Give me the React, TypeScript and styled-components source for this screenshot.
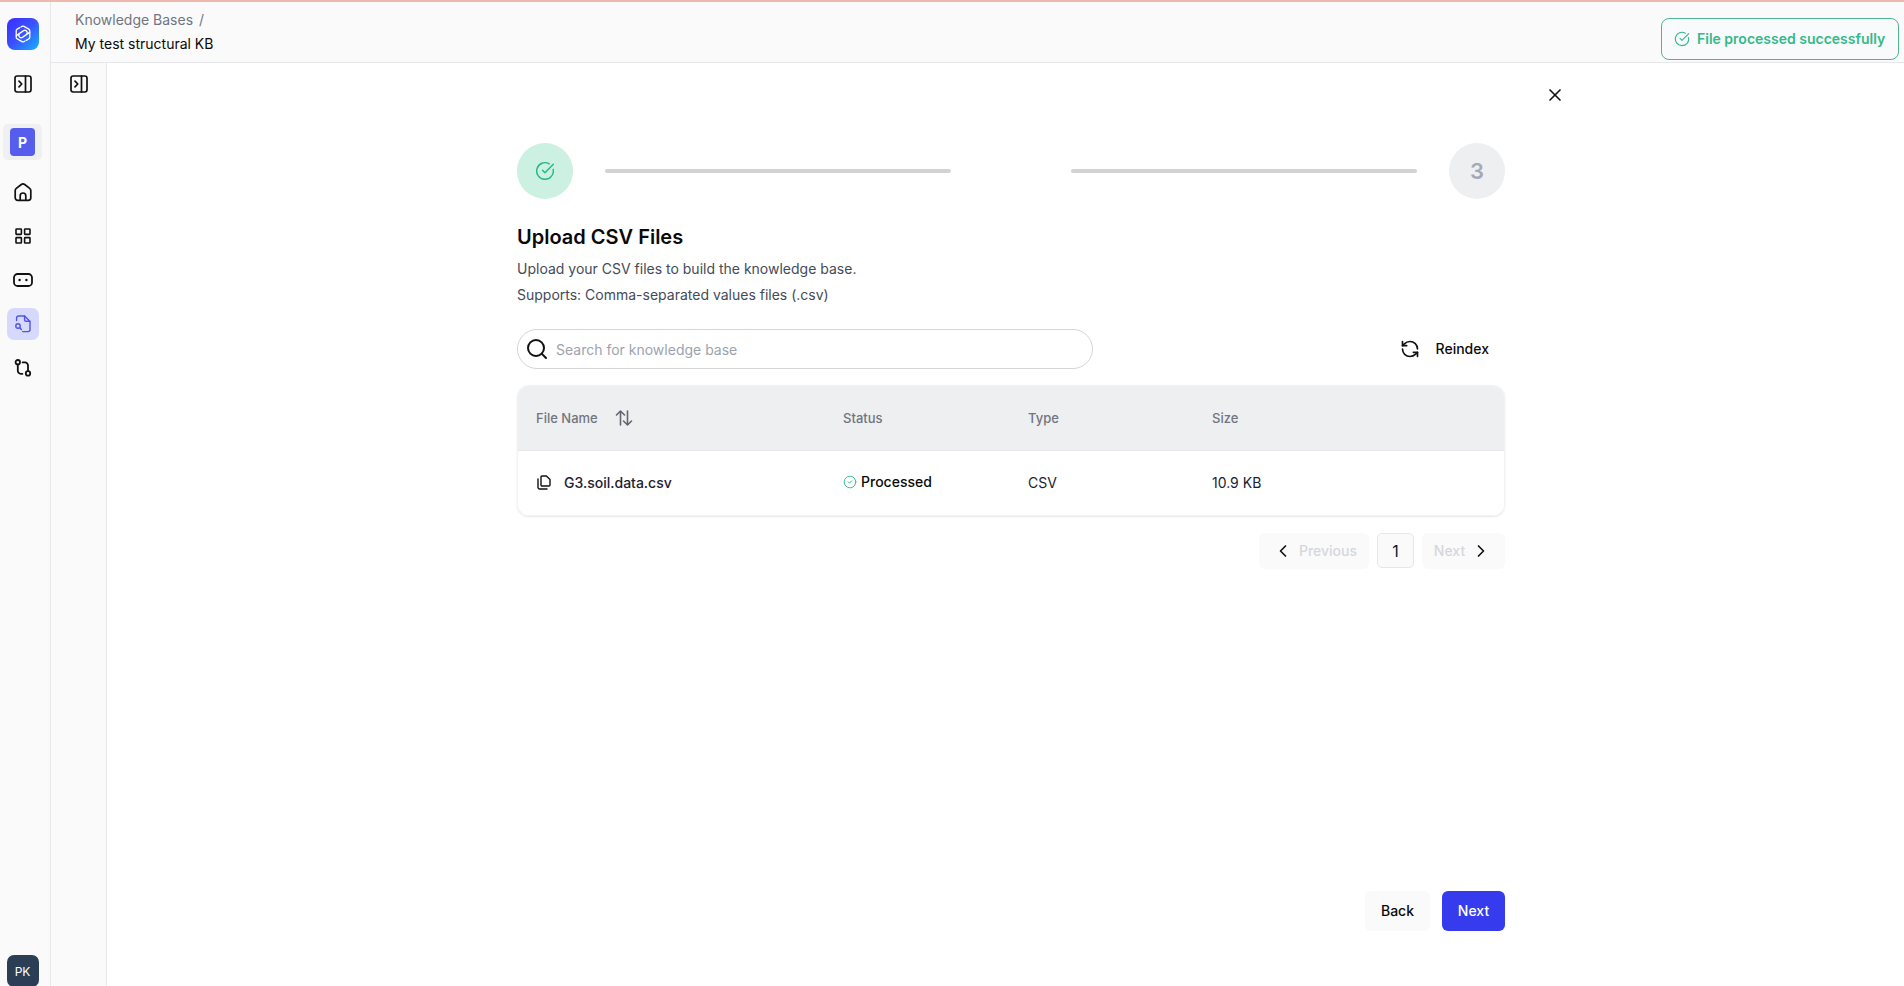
import React from 'react';
import styled, { createGlobalStyle } from 'styled-components';
import { ChevronLeft, ChevronRight, CircleCheck, CircleCheckBig, RefreshCcw, Search, X } from 'lucide-react';

const GlobalStyle = createGlobalStyle`
    html, body {
        margin: 0;
        padding: 0;
        height: 100%;
        overflow: hidden;
        background: #fff;
    }
    * {
        box-sizing: border-box;
    }
    body {
        font-family: Inter, "Liberation Sans", sans-serif;
        color: #0a0a0a;
    }
`;

const PanelToggleIcon = () => (
    <svg width="18" height="18" viewBox="0 0 18 18" fill="none" stroke="#111" strokeWidth="1.7" strokeLinecap="round" strokeLinejoin="round">
        <rect x="1" y="1" width="16" height="16" rx="2.2" />
        <path d="M11.5 1v16" />
        <path d="M5 6.2 7.8 9 5 11.8" />
    </svg>
);

const HomeIcon = () => (
    <svg width="18" height="20" viewBox="0 0 18 20" fill="none" stroke="#111" strokeWidth="1.7" strokeLinecap="round" strokeLinejoin="round">
        <path d="M1.2 8.6c0-.9.4-1.7 1.1-2.2l5-3.9a2.8 2.8 0 0 1 3.4 0l5 3.9c.7.5 1.1 1.3 1.1 2.2v7.2a2.6 2.6 0 0 1-2.6 2.6H3.8a2.6 2.6 0 0 1-2.6-2.6V8.6Z" />
        <path d="M6.2 18.2v-4.4a2.8 2.8 0 0 1 5.6 0v4.4" />
    </svg>
);

const GridIcon = () => (
    <svg width="16" height="16" viewBox="0 0 16 16" fill="none" stroke="#111" strokeWidth="1.6" strokeLinejoin="round">
        <rect x="1" y="1" width="5.4" height="5.4" rx="0.6" />
        <rect x="9.6" y="1" width="5.4" height="5.4" rx="0.6" />
        <rect x="1" y="9.6" width="5.4" height="5.4" rx="0.6" />
        <rect x="9.6" y="9.6" width="5.4" height="5.4" rx="0.6" />
    </svg>
);

const BotIcon = () => (
    <svg width="20" height="14" viewBox="0 0 20 14" fill="none">
        <rect x="1" y="1" width="18" height="12" rx="3.6" stroke="#111" strokeWidth="1.8" />
        <circle cx="6.6" cy="7" r="1.2" fill="#111" />
        <circle cx="13.4" cy="7" r="1.2" fill="#111" />
    </svg>
);

const FileSearchIcon = () => (
    <svg width="18" height="18" viewBox="0 0 18 18" fill="none" stroke="#4f55e8" strokeWidth="1.4" strokeLinecap="round" strokeLinejoin="round">
        <path d="M2.6 5.6V3a2 2 0 0 1 2-2h6L16 6.4v8.2a2 2 0 0 1-2 2H8.6" />
        <path d="M10.6 1v4a1.2 1.2 0 0 0 1.2 1.2H16" />
        <circle cx="4" cy="11" r="2.2" />
        <path d="M5.7 12.8 7.4 14.6" />
    </svg>
);

const RouteIcon = () => (
    <svg width="18" height="18" viewBox="0 0 18 18" fill="none" stroke="#111" strokeWidth="1.8" strokeLinecap="round" strokeLinejoin="round">
        <circle cx="3.8" cy="3.2" r="2.2" />
        <circle cx="14" cy="14.4" r="2.2" />
        <path d="M3.8 5.6v6.2a3 3 0 0 0 3 3h1.6" />
        <path d="M14 12.2V6.4a3 3 0 0 0-3-3H8.6" />
    </svg>
);

const LogoMark = () => (
    <svg width="18" height="18" viewBox="0 0 18 18" fill="none" stroke="#fff" strokeWidth="1.3" strokeLinecap="round" strokeLinejoin="round">
        <path d="M7 2 8 1.4a2 2 0 0 1 2 0l4.8 2.7a2 2 0 0 1 1 1.7v6.4a2 2 0 0 1-1 1.7l-2.6 1.5" />
        <path d="M11 16 10 16.6a2 2 0 0 1-2 0l-4.8-2.7a2 2 0 0 1-1-1.7V5.8a2 2 0 0 1 1-1.7l2.6-1.5" />
        <path d="M2.4 10.6 9.6 5.6a2.4 2.4 0 0 1 3.2 3.4" />
        <path d="M15.6 7.4 8.4 12.4a2.4 2.4 0 0 1-3.2-3.4" />
    </svg>
);

const SortIcon = () => (
    <svg width="18" height="18" viewBox="0 0 18 18" fill="none" stroke="#62666f" strokeWidth="1.6" strokeLinecap="round" strokeLinejoin="round">
        <path d="M5.5 16V2M1.5 6l4-4 4 4" />
        <path d="M12.5 2v14M8.5 12l4 4 4-4" />
    </svg>
);

const FileCopyIcon = () => (
    <svg width="14" height="15" viewBox="0 0 14 15" fill="none" stroke="#111" strokeWidth="1.4" strokeLinecap="round" strokeLinejoin="round">
        <path d="M4 3.4V2a1 1 0 0 1 1-1h4.4L13 4.4V10a1 1 0 0 1-1 1H5a1 1 0 0 1-1-1V3.4Z" />
        <path d="M1 4v8.6A1.4 1.4 0 0 0 2.4 14H10" />
    </svg>
);

const COLUMNS = ['Status', 'Type', 'Size'];

export default function App(): JSX.Element {
    return (
        <>
            <GlobalStyle />
            <Page>
                <TopLine />
                <Body>
                    <Rail>
                        <Logo><LogoMark /></Logo>
                        <RailToggle><PanelToggleIcon /></RailToggle>
                        <ProjectWrap><ProjectTile>P</ProjectTile></ProjectWrap>
                        <Nav>
                            <NavItem><HomeIcon /></NavItem>
                            <NavItem><GridIcon /></NavItem>
                            <NavItem><BotIcon /></NavItem>
                            <NavItem $active><FileSearchIcon /></NavItem>
                            <NavItem><RouteIcon /></NavItem>
                        </Nav>
                        <Avatar>PK</Avatar>
                    </Rail>
                    <Right>
                        <Header>
                            <Crumb>Knowledge Bases<CrumbSep>/</CrumbSep></Crumb>
                            <CrumbCurrent>My test structural KB</CrumbCurrent>
                            <Toast>
                                <CircleCheckBig size={16} strokeWidth={1.7} />
                                File processed successfully
                            </Toast>
                        </Header>
                        <Content>
                            <SubRail><PanelToggleIcon /></SubRail>
                            <Main>
                                <CloseRow><X size={20} strokeWidth={2} color="#111" /></CloseRow>
                                <Wizard>
                                    <Stepper>
                                        <StepDone><CircleCheckBig size={20} strokeWidth={1.7} /></StepDone>
                                        <StepLine />
                                        <StepGap />
                                        <StepLine />
                                        <StepTodo>3</StepTodo>
                                    </Stepper>
                                    <Title>Upload CSV Files</Title>
                                    <Description>Upload your CSV files to build the knowledge base.</Description>
                                    <Description>Supports: Comma-separated values files (.csv)</Description>
                                    <Toolbar>
                                        <SearchBox>
                                            <Search size={24} strokeWidth={2} color="#111" />
                                            <SearchInput placeholder="Search for knowledge base" />
                                        </SearchBox>
                                        <Reindex>
                                            <RefreshCcw size={20} strokeWidth={2} color="#111" />
                                            <ReindexLabel>Reindex</ReindexLabel>
                                        </Reindex>
                                    </Toolbar>
                                    <Table>
                                        <HeadRow>
                                            <HeadCell>File Name<SortWrap><SortIcon /></SortWrap></HeadCell>
                                            {COLUMNS.map(name => <HeadCell key={name}>{name}</HeadCell>)}
                                        </HeadRow>
                                        <DataRow>
                                            <NameCell><FileCopyIcon />G3.soil.data.csv</NameCell>
                                            <StatusCell>
                                                <CircleCheck size={14} strokeWidth={1.6} color="#34b98a" />
                                                Processed
                                            </StatusCell>
                                            <DataCell>CSV</DataCell>
                                            <DataCell>10.9 KB</DataCell>
                                        </DataRow>
                                    </Table>
                                    <Pager>
                                        <PagerButton $width={110} $shift="left">
                                            <ChevronLeft size={20} strokeWidth={2} color="#111" />
                                            <PagerLabel>Previous</PagerLabel>
                                        </PagerButton>
                                        <PageNumber>1</PageNumber>
                                        <PagerButton $width={83} $shift="right">
                                            <PagerLabel>Next</PagerLabel>
                                            <ChevronRight size={20} strokeWidth={2} color="#111" />
                                        </PagerButton>
                                    </Pager>
                                    <Footer>
                                        <BackButton>Back</BackButton>
                                        <NextButton>Next</NextButton>
                                    </Footer>
                                </Wizard>
                            </Main>
                        </Content>
                    </Right>
                </Body>
            </Page>
        </>
    );
}

const Page = styled.div`
    width: 100%;
    height: 100vh;
    display: flex;
    flex-direction: column;
    overflow: hidden;
`;

const TopLine = styled.div`
    height: 2px;
    flex: none;
    background: #eeb9ad;
`;

const Body = styled.div`
    flex: 1;
    min-height: 0;
    display: flex;
`;

const Rail = styled.aside`
    width: 51px;
    flex: none;
    display: flex;
    flex-direction: column;
    align-items: center;
    padding-top: 16px;
    padding-right: 5px;
    background: #fafafb;
    border-right: 1px solid #e5e7eb;
`;

const Logo = styled.div`
    width: 32px;
    height: 32px;
    flex: none;
    display: flex;
    align-items: center;
    justify-content: center;
    border-radius: 8px;
    background: linear-gradient(135deg, #3c2cff 0%, #3a52ff 50%, #14b4ff 100%);
`;

const RailToggle = styled.div`
    height: 24px;
    margin-top: 22px;
    display: flex;
    align-items: center;
    justify-content: center;
`;

const ProjectWrap = styled.div`
    width: 39px;
    height: 36px;
    margin-top: 28px;
    display: flex;
    align-items: center;
    justify-content: center;
    border-radius: 5px;
    background: #eff0f2;
`;

const ProjectTile = styled.div`
    width: 25px;
    height: 28px;
    display: flex;
    align-items: center;
    justify-content: center;
    border-radius: 4px;
    background: #565ded;
    color: #fff;
    font-size: 14px;
    font-weight: 700;
`;

const Nav = styled.nav`
    margin-top: 16px;
    display: flex;
    flex-direction: column;
    gap: 12px;
`;

const NavItem = styled.div<{ $active?: boolean }>`
    width: 32px;
    height: 32px;
    display: flex;
    align-items: center;
    justify-content: center;
    border-radius: 7px;
    background: ${props => (props.$active ? '#d6d9fb' : 'transparent')};
`;

const Avatar = styled.div`
    width: 32px;
    height: 32px;
    flex: none;
    margin-top: auto;
    margin-bottom: -1px;
    display: flex;
    align-items: center;
    justify-content: center;
    border-radius: 7px;
    background: #2c3e55;
    color: #fff;
    font-size: 12px;
`;

const Right = styled.div`
    flex: 1;
    min-width: 0;
    display: flex;
    flex-direction: column;
`;

const Header = styled.header`
    position: relative;
    height: 61px;
    flex: none;
    padding: 6px 0 0 24px;
    background: #fafafb;
    border-bottom: 1px solid #e5e7eb;
    font-size: 14px;
    line-height: 24px;
`;

const Crumb = styled.div`
    color: #71757f;
`;

const CrumbSep = styled.span`
    margin-left: 6px;
`;

const CrumbCurrent = styled.div`
    color: #0a0a0a;
`;

const Toast = styled.div`
    position: absolute;
    top: 16px;
    right: 5px;
    width: 238px;
    height: 42px;
    display: flex;
    align-items: center;
    gap: 7px;
    padding-left: 12px;
    border: 1px solid #4fb68f;
    border-radius: 8px;
    background: #f9fafb;
    color: #34b98a;
    font-size: 14px;
    font-weight: 600;
    white-space: nowrap;
`;

const Content = styled.div`
    flex: 1;
    min-height: 0;
    display: flex;
`;

const SubRail = styled.div`
    width: 56px;
    flex: none;
    display: flex;
    justify-content: center;
    padding-top: 12px;
    background: #fafafb;
    border-right: 1px solid #e5e7eb;
`;

const Main = styled.main`
    flex: 1;
    min-width: 0;
    display: flex;
    flex-direction: column;
    background: #fff;
`;

const CloseRow = styled.div`
    height: 80px;
    flex: none;
    display: flex;
    justify-content: flex-end;
    padding: 22px 339px 0 0;
`;

const Wizard = styled.div`
    width: 988px;
    flex: 1;
    min-height: 0;
    margin-left: 410px;
    padding-bottom: 55px;
    display: flex;
    flex-direction: column;
`;

const Stepper = styled.div`
    display: flex;
    align-items: center;
    gap: 32px;
`;

const StepDone = styled.div`
    width: 56px;
    height: 56px;
    flex: none;
    display: flex;
    align-items: center;
    justify-content: center;
    border-radius: 50%;
    background: #ccf0e1;
    color: #22b981;
`;

const StepTodo = styled(StepDone)`
    background: #eeeff1;
    color: #a4a9b6;
    font-size: 22px;
    font-weight: 600;
`;

const StepLine = styled.div`
    flex: 1;
    height: 4px;
    border-radius: 2px;
    background: #d1d2d4;
`;

const StepGap = styled.div`
    width: 56px;
    flex: none;
`;

const Title = styled.h2`
    margin: 26px 0 0;
    font-size: 20px;
    line-height: 24px;
    font-weight: 600;
    color: #0a0a0a;
`;

const Description = styled.p`
    margin: 11px 0 0;
    font-size: 14px;
    line-height: 18px;
    color: #454a58;
    & + & {
        margin-top: 8px;
    }
`;

const Toolbar = styled.div`
    margin-top: 25px;
    display: flex;
    align-items: center;
    justify-content: space-between;
`;

const SearchBox = styled.div`
    width: 576px;
    height: 40px;
    display: flex;
    align-items: center;
    gap: 7px;
    padding-left: 7px;
    border: 1px solid #d4d5d9;
    border-radius: 20px;
`;

const SearchInput = styled.input`
    flex: 1;
    border: none;
    outline: none;
    background: transparent;
    font-family: inherit;
    font-size: 14px;
    color: #0a0a0a;
    padding: 0;
    &::placeholder {
        color: #9ca3af;
        opacity: 1;
    }
`;

const Reindex = styled.div`
    display: flex;
    align-items: center;
    gap: 16px;
    padding-right: 16px;
    font-size: 14px;
    font-weight: 500;
`;

const ReindexLabel = styled.span`
    margin-top: -1px;
`;

const Table = styled.div`
    margin-top: 16px;
    border: 1px solid #f1f2f4;
    border-radius: 12px;
    overflow: hidden;
    box-shadow: 0 1px 2px rgba(16, 24, 40, 0.1);
`;

const HeadRow = styled.div`
    height: 65px;
    display: grid;
    grid-template-columns: 307px 185px 184px 1fr;
    align-items: center;
    padding-left: 18px;
    background: #eeeff1;
    border-bottom: 1px solid #e5e7eb;
`;

const HeadCell = styled.div`
    display: flex;
    align-items: center;
    font-size: 13px;
    font-weight: 500;
    color: #71757f;
`;

const SortWrap = styled.span`
    display: flex;
    margin-left: 17px;
`;

const DataRow = styled.div`
    height: 64px;
    display: grid;
    grid-template-columns: 307px 185px 184px 1fr;
    align-items: center;
    padding: 0 0 2px 18px;
    background: #fff;
`;

const DataCell = styled.div`
    font-size: 14px;
    color: #1d2130;
`;

const NameCell = styled(DataCell)`
    display: flex;
    align-items: center;
    gap: 13px;
    padding-left: 1px;
    font-weight: 500;
`;

const StatusCell = styled(DataCell)`
    display: flex;
    align-items: center;
    gap: 4px;
    margin-top: -1px;
    font-weight: 500;
    color: #0a0a0a;
`;

const Pager = styled.div`
    margin-top: 17px;
    display: flex;
    justify-content: flex-end;
    gap: 8px;
`;

const PagerButton = styled.div<{ $width: number; $shift: 'left' | 'right' }>`
    width: ${props => props.$width}px;
    height: 36px;
    display: flex;
    align-items: center;
    justify-content: center;
    gap: 6px;
    padding-${props => props.$shift}: 2px;
    padding-bottom: 1px;
    border-radius: 6px;
    background: #fafafb;
`;

const PagerLabel = styled.span`
    font-size: 14px;
    font-weight: 500;
    color: #d5d7db;
`;

const PageNumber = styled.div`
    width: 37px;
    height: 35px;
    display: flex;
    align-items: center;
    justify-content: center;
    border: 1px solid #e5e7eb;
    border-radius: 5px;
    background: #fafafb;
    font-size: 16px;
    color: #0a1a30;
`;

const Footer = styled.div`
    margin-top: auto;
    display: flex;
    justify-content: flex-end;
    gap: 12px;
`;

const BackButton = styled.button`
    width: 65px;
    height: 40px;
    padding: 0 0 2px;
    border: none;
    border-radius: 6px;
    background: #fafafb;
    font-family: inherit;
    font-size: 14px;
    font-weight: 500;
    color: #0a0a0a;
`;

const NextButton = styled(BackButton)`
    width: 63px;
    background: #363ced;
    color: #fff;
`;
